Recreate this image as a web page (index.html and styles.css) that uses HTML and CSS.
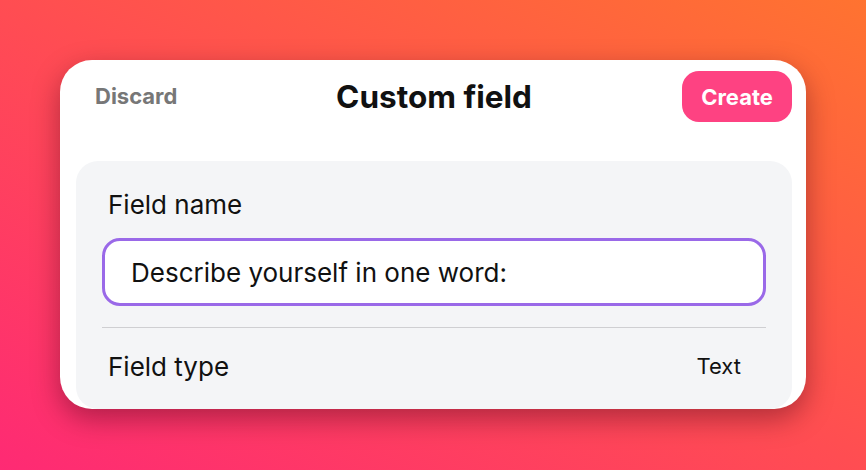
FILE: index.html
```html
<!DOCTYPE html>
<html lang="en">
<head>
  <meta charset="UTF-8" />
  <meta name="viewport" content="width=device-width, initial-scale=1.0" />
  <title>Custom field</title>
  <link rel="stylesheet" href="styles.css">
</head>
<body>
  <div class="modal">
    <div class="modal-header">
      <button class="discard-btn">Discard</button>
      <h1>Custom field</h1>
      <button class="create-btn">Create</button>
    </div>
    <div class="panel">
      <label class="field-label" for="fieldName">Field name</label>
      <input type="text" id="fieldName" value="Describe yourself in one word:">
      <div class="type-row">
        <span class="type-label">Field type</span>
        <span class="type-value">Text</span>
      </div>
    </div>
  </div>
</body>
</html>
```

FILE: styles.css
```css
* {
  box-sizing: border-box;
  margin: 0;
  padding: 0;
}
body {
  font-family: 'Inter', 'Liberation Sans', sans-serif;
  background: linear-gradient(to top right, #fe2a74, #ff4d52 50%, #ff7330);
  color: #111;
  width: 866px;
  height: 470px;
  padding: 60px;
  overflow: hidden;
}
.modal {
  width: 746px;
  height: 349px;
  background: #fff;
  border-radius: 32px;
  overflow: hidden;
  box-shadow: 0 10px 28px rgba(60, 0, 20, 0.4);
}
.modal-header {
  display: grid;
  grid-template-columns: 1fr auto 1fr;
  align-items: center;
  padding: 11px 14px 0 16px;
  height: 101px;
  align-content: start;
}
.modal-header h1 {
  font-size: 31.5px;
  font-weight: 700;
  line-height: 51px;
  color: #111;
}
button {
  font-family: inherit;
  border: none;
  cursor: pointer;
  font-weight: 700;
}
.discard-btn {
  justify-self: start;
  background: none;
  color: #777;
  font-size: 22px;
  padding: 0 19px;
  line-height: 51px;
}
.create-btn {
  justify-self: end;
  background: #fe4282;
  color: #fff;
  font-size: 22px;
  width: 110px;
  height: 51px;
  border-radius: 17px;
}
.panel {
  margin: 0 14px 0 16px;
  background: #f4f5f7;
  border-radius: 22px;
  padding: 28px 26px 0 26px;
  height: 248px;
}
.field-label {
  display: block;
  font-size: 26px;
  line-height: 31px;
  padding-left: 6px;
}
input {
  display: block;
  width: 100%;
  height: 68px;
  margin-top: 18px;
  border: 3px solid #9a69e8;
  border-radius: 18px;
  background: #fff;
  padding: 0 26px;
  font-family: inherit;
  font-size: 26px;
  color: #111;
  outline: none;
}
.type-row {
  margin-top: 21px;
  border-top: 1px solid #cfcfd2;
  padding: 23px 25px 0 6px;
  display: flex;
  justify-content: space-between;
  align-items: center;
}
.type-label {
  font-size: 26px;
  line-height: 31px;
}
.type-value {
  font-size: 22px;
  line-height: 31px;
}
```
